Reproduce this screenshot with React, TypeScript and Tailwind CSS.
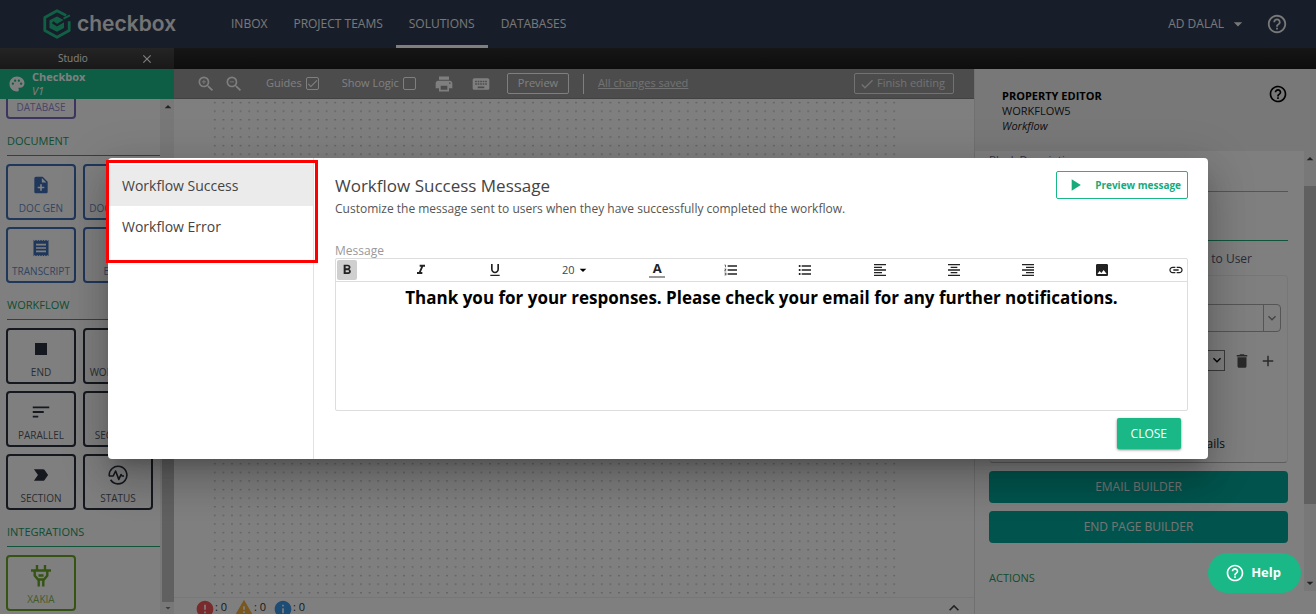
import type { ReactNode } from "react";
import {
  MdArrowDropDown,
  MdCheck,
  MdClose,
  MdDelete,
  MdAdd,
  MdError,
  MdExpandLess,
  MdFormatAlignCenter,
  MdFormatAlignLeft,
  MdFormatAlignRight,
  MdFormatBold,
  MdFormatItalic,
  MdFormatListBulleted,
  MdFormatListNumbered,
  MdFormatUnderlined,
  MdHelpOutline,
  MdImage,
  MdInfo,
  MdKeyboard,
  MdKeyboardArrowDown,
  MdLabelImportant,
  MdLink,
  MdNoteAdd,
  MdPalette,
  MdPlayArrow,
  MdPrint,
  MdReceipt,
  MdSort,
  MdStop,
  MdWarning,
  MdZoomIn,
  MdZoomOut,
} from "react-icons/md";

function Logo() {
  return (
    <svg viewBox="0 0 28 30" className="h-[30px] w-7" fill="none" aria-hidden="true">
      <path
        d="M23.2 6.4 14 1.7 1.8 8.4v13.2L14 28.3l12.2-6.7v-9.4"
        stroke="#23c08b"
        strokeWidth="2.8"
        strokeLinejoin="round"
      />
      <path d="M14 7.5 21 11.3v7.6L14 22.8l-7.5-3.9v-7.6z" fill="#23c08b" />
      <path d="M9.6 13.2l4.4 3 13.5-8" stroke="#2e3a52" strokeWidth="2.4" />
      <path d="M20.5 9.6 26.9 6.4" stroke="#23c08b" strokeWidth="2" />
    </svg>
  );
}

function PulseIcon() {
  return (
    <svg viewBox="0 0 20 20" className="size-5" fill="none" stroke="currentColor" strokeWidth="1.6" strokeLinejoin="round">
      <path d="M1.3 11.2A8.8 8.8 0 1 1 2.6 14.8M4 16.6c.5.5 1 .8 1.5 1.1" />
      <path d="M1 11h4.2l2.4-5 3.2 8.4 2.2-4.8 1.2 1.4H16" />
    </svg>
  );
}

function PlugIcon() {
  return (
    <svg viewBox="0 0 20 22" className="h-[22px] w-5" fill="none" stroke="currentColor" strokeWidth="2.4">
      <path d="M6 0v5M14 0v5M0 5.5h20M3.7 6v4.500L7 14.500h6l3.300-4V6M7.700 14v7.500M12.300 14v7.500M7.500 10.500h5" />
    </svg>
  );
}

type Tile = { label: string; icon?: ReactNode };
type Section = { title: string; color: string; tiles: Tile[] };

const sections: Section[] = [
  {
    title: "DOCUMENT",
    color: "border-[#3c6eb4] text-[#3c6eb4]",
    tiles: [
      { label: "DOC GEN", icon: <MdNoteAdd /> },
      { label: "DOC MERGE" },
      { label: "TRANSCRIPT", icon: <MdReceipt /> },
      { label: "EMAIL" },
    ],
  },
  {
    title: "WORKFLOW",
    color: "border-[#2a303c] text-[#2a303c]",
    tiles: [
      { label: "END", icon: <MdStop className="size-6" /> },
      { label: "WORKFLOW" },
      { label: "PARALLEL", icon: <MdSort className="size-[22px]" /> },
      { label: "SECTIONS" },
      { label: "SECTION", icon: <MdLabelImportant /> },
      { label: "STATUS", icon: <PulseIcon /> },
    ],
  },
  {
    title: "INTEGRATIONS",
    color: "border-[#6aa626] text-[#6aa626]",
    tiles: [{ label: "XAKIA", icon: <PlugIcon /> }],
  },
];

function TileButton({ label, icon, color }: Tile & { color: string }) {
  return (
    <button type="button" className={`flex h-14 w-[70px] flex-col items-center justify-end rounded border-2 pb-[3px] ${color}`}>
      <span className="mb-1 flex h-6 items-center text-[20px]">{icon}</span>
      <span className="text-[10px] leading-[14px] whitespace-nowrap opacity-80">{label}</span>
    </button>
  );
}

function TopNav() {
  return (
    <header className="flex h-12 shrink-0 items-center bg-[#2e3a52] text-[#f0f0f0]">
      <a href="#" className="ml-[43px] flex w-[175px] items-center gap-1.5 text-[#e8e8e8]">
        <Logo />
        <span className="font-[Inter] text-[21px] font-semibold">checkbox</span>
      </a>
      <nav className="flex h-full items-stretch text-[12px]">
        {["INBOX", "PROJECT TEAMS", "SOLUTIONS", "DATABASES"].map((item) => (
          <a
            key={item}
            href="#"
            className={`flex items-center border-b-[3px] px-[13px] pt-[3px] ${item === "SOLUTIONS" ? "border-white" : "border-transparent"}`}
          >
            {item}
          </a>
        ))}
      </nav>
      <button type="button" className="ml-auto flex items-center gap-1 text-[12px]">
        AD DALAL
        <MdArrowDropDown className="size-5" />
      </button>
      <button type="button" aria-label="Help centre" className="mr-7 ml-4.5">
        <MdHelpOutline className="size-[22px]" />
      </button>
    </header>
  );
}

function TabStrip() {
  return (
    <div className="flex h-[21px] shrink-0 bg-linear-to-b from-[#2c2c2c] to-[#1c1c1c]">
      <div className="flex w-[174px] items-center bg-linear-to-b from-[#484848] to-[#323232] text-[10px] text-white">
        <span className="ml-[58px]">Studio</span>
        <button type="button" aria-label="Close tab" className="mr-5 ml-auto">
          <MdClose className="size-[14px]" />
        </button>
      </div>
    </div>
  );
}

function Sidebar() {
  return (
    <aside className="flex w-[174px] shrink-0 flex-col overflow-hidden">
      <div className="flex h-[30px] shrink-0 items-center gap-1.5 bg-[#1abc88] pl-2 text-white">
        <MdPalette className="size-[18px]" />
        <div className="text-[11px] leading-[14px]">
          <div className="font-bold">Checkbox</div>
          <div className="italic">V1</div>
        </div>
      </div>
      <div className="flex min-h-0 flex-1">
        <div className="w-40 shrink-0 overflow-hidden">
          <div className="-mt-9 pl-1.5">
            <TileButton label="DATABASE" color="border-[#7b6bc0] text-[#7b6bc0]" />
          </div>
          {sections.map((section) => (
            <section key={section.title}>
              <h2 className="mt-[13px] mb-2 ml-[7px] h-6 border-b border-[#20a878] text-[11px] leading-[18px] text-[#1b9a64]">
                {section.title}
              </h2>
              <div className="flex flex-wrap gap-[7px] pl-1.5">
                {section.tiles.map((tile) => (
                  <TileButton key={tile.label} {...tile} color={section.color} />
                ))}
              </div>
            </section>
          ))}
        </div>
        <div className="flex flex-1 flex-col items-center bg-[#f1f1f1]">
          <MdArrowDropDown className="size-4 rotate-180 text-[#444]" />
          <div className="mt-20 w-3 flex-1 bg-[#c1c1c1]" />
          <MdArrowDropDown className="size-3 text-[#777]" />
        </div>
      </div>
    </aside>
  );
}

function Canvas() {
  return (
    <main className="flex min-w-0 flex-1 flex-col">
      <div className="flex h-[30px] shrink-0 items-center border-b border-[#858585] bg-[#989898] pl-[22px] text-[11px] text-white">
        <button type="button" aria-label="Zoom in">
          <MdZoomIn className="size-5" />
        </button>
        <button type="button" aria-label="Zoom out" className="ml-2">
          <MdZoomOut className="size-5" />
        </button>
        <label className="ml-[22px] flex items-center gap-1">
          Guides
          <span className="relative flex size-[13px]">
            <input type="checkbox" defaultChecked className="size-[13px] appearance-none rounded-xs border border-current" />
            <MdCheck className="pointer-events-none absolute inset-0 size-[13px]" />
          </span>
        </label>
        <label className="ml-[23px] flex items-center gap-1">
          Show Logic
          <input type="checkbox" className="size-[13px] appearance-none rounded-xs border border-current" />
        </label>
        <button type="button" aria-label="Print" className="ml-[18px]">
          <MdPrint className="size-5" />
        </button>
        <button type="button" aria-label="Shortcuts" className="ml-[17px]">
          <MdKeyboard className="size-5" />
        </button>
        <button type="button" className="ml-4 h-[21px] rounded-xs border border-current px-2.5">
          Preview
        </button>
        <div className="ml-3.5 h-5 w-px bg-white" />
        <a href="#" className="ml-3.5 text-[#e4e4e4] underline">
          All changes saved
        </a>
        <button type="button" className="mr-5 ml-auto flex h-[21px] items-center gap-0.5 rounded-xs border border-current pr-2 pl-1 text-[#e4e4e4]">
          <MdCheck className="size-4" />
          Finish editing
        </button>
      </div>
      <div className="min-h-0 flex-1 pr-[75px] pl-[37px]">
        <svg className="size-full" aria-hidden="true">
          <defs>
            <pattern id="dots" width="8.6" height="8.6" patternUnits="userSpaceOnUse">
              <rect x="3.2" y="3" width="1.2" height="1.2" fill="#999" />
            </pattern>
          </defs>
          <rect width="100%" height="100%" fill="url(#dots)" />
        </svg>
      </div>
      <div className="flex h-[17px] shrink-0 items-start gap-[7px] overflow-hidden border-t border-[#eee] pl-[21px] text-[11px] leading-[18px] text-[#333]">
        <span className="flex">
          <MdError className="mt-px size-5 text-[#f2555a]" />: 0
        </span>
        <span className="flex">
          <MdWarning className="size-5 text-[#f0b040]" />: 0
        </span>
        <span className="flex">
          <MdInfo className="mt-px size-5 text-[#3a98ea]" />: 0
        </span>
        <MdExpandLess className="mr-2.5 ml-auto size-5 text-[#444]" />
      </div>
    </main>
  );
}

function PropertyEditor() {
  return (
    <aside className="flex w-[342px] shrink-0 flex-col border-l border-[#e0e0e0]">
      <div className="flex h-[82px] shrink-0 items-start justify-between bg-[#f0f0f0] pt-[19px] pr-7 pl-[27px] text-[11px] leading-[15px] text-[#222]">
        <div>
          <h2 className="font-bold text-black">PROPERTY EDITOR</h2>
          <div>WORKFLOW5</div>
          <div className="italic">Workflow</div>
        </div>
        <MdHelpOutline className="-mt-1 size-5 text-black" />
      </div>
      <div className="flex min-h-0 flex-1">
        <div className="min-w-0 flex-1 pr-4 pl-3.5">
          <label htmlFor="block-description" className="block text-[11px] leading-[18px] text-[#666a88]">
            Block Description
          </label>
          <input id="block-description" className="block h-[23px] w-full border-b border-[#aaa] bg-transparent" />
          <div className="mt-12 h-px bg-[#20a878]" />
          <div className="mt-2 mb-1.5 flex justify-end pr-9 text-[12px] leading-5 text-[#555a70]">Email to User</div>
          <div className="flex h-[188px] flex-col rounded border border-[#eee] border-b-[#bbb] px-1.5 pt-7">
            <button type="button" aria-label="Recipient" className="flex h-7 shrink-0 justify-end rounded border border-[#aaa]">
              <span className="flex h-full items-center border-l border-[#aaa] text-[#888]">
                <MdKeyboardArrowDown className="size-4" />
              </span>
            </button>
            <div className="mt-[18px] flex items-center justify-end gap-2 text-[#555]">
              <div className="relative flex w-40">
                <select aria-label="Template" className="h-[21px] w-full appearance-none border border-[#777]" />
                <MdKeyboardArrowDown className="pointer-events-none absolute top-0.5 right-0 size-4 text-black" />
              </div>
              <MdDelete className="size-[18px]" />
              <MdAdd className="mr-1 size-[18px]" />
            </div>
            <div className="mt-[63px] flex justify-end pr-14 text-[12px] leading-5 text-[#222]">Details</div>
          </div>
          <button type="button" className="mt-2 block h-8 w-full rounded-sm bg-[#00a99a] text-[12px] text-[#e8e8e8]">
            EMAIL BUILDER
          </button>
          <button type="button" className="mt-2 block h-8 w-full rounded-sm bg-[#00a99a] text-[12px] text-[#e8e8e8]">
            END PAGE BUILDER
          </button>
          <h3 className="mt-[26px] text-[11px] leading-[18px] text-[#1b9a64]">ACTIONS</h3>
        </div>
        <div className="mb-[23px] flex w-3 flex-col items-center bg-[#f1f1f1]">
          <MdArrowDropDown className="size-4 rotate-180 text-[#444]" />
          <div className="mt-[19px] h-[318px] w-full bg-[#c1c1c1]" />
          <MdArrowDropDown className="mt-auto size-4 text-[#444]" />
        </div>
      </div>
    </aside>
  );
}

const editorTools = [
  { label: "Bold", icon: <MdFormatBold /> },
  { label: "Italic", icon: <MdFormatItalic /> },
  { label: "Underline", icon: <MdFormatUnderlined /> },
  { label: "Font size" },
  { label: "Text colour", icon: <span className="flex h-4 w-4 items-center justify-center border-b-2 border-[#999] text-[13px] font-bold">A</span> },
  { label: "Numbered list", icon: <MdFormatListNumbered /> },
  { label: "Bulleted list", icon: <MdFormatListBulleted /> },
  { label: "Align left", icon: <MdFormatAlignLeft /> },
  { label: "Align center", icon: <MdFormatAlignCenter /> },
  { label: "Align right", icon: <MdFormatAlignRight /> },
  { label: "Insert image", icon: <MdImage /> },
  { label: "Insert link", icon: <MdLink /> },
];

function EditorToolbar() {
  return (
    <div className="flex h-[23px] items-center justify-between border-b border-[#ddd] px-px">
      {editorTools.map((tool) =>
        tool.icon ? (
          <button
            key={tool.label}
            type="button"
            aria-label={tool.label}
            className={`flex size-5 items-center justify-center rounded-xs text-[16px] text-[#222] ${tool.label === "Bold" ? "bg-[#cfcfcf]" : ""}`}
          >
            {tool.icon}
          </button>
        ) : (
          <button key={tool.label} type="button" aria-label={tool.label} className="flex w-[34px] items-center justify-center text-[11px] text-[#444]">
            20
            <MdArrowDropDown className="size-4 text-black" />
          </button>
        )
      )}
    </div>
  );
}

function MessageDialog() {
  return (
    <div className="absolute inset-0 flex items-center justify-center bg-black/50 px-4 pt-[3px]">
      <div
        role="dialog"
        aria-label="Workflow Success Message"
        className="relative flex w-full max-w-[1100px] rounded bg-white text-[#444] shadow-[0_11px_15px_-7px_rgba(0,0,0,0.2),0_24px_38px_3px_rgba(0,0,0,0.14),0_9px_46px_8px_rgba(0,0,0,0.12)]"
      >
        <div className="w-[206px] shrink-0 border-r border-[#e2e2e2] pt-[7px] text-[14px]">
          <button type="button" className="block h-[41px] w-full bg-[#ebebeb] pl-3.5 text-left">
            Workflow Success
          </button>
          <button type="button" className="block h-[41px] w-full pl-3.5 text-left">
            Workflow Error
          </button>
        </div>
        <div className="absolute top-0.5 -left-0.5 h-[103px] w-[212px] border-3 border-[#ff0000]" />
        <div className="flex min-w-0 flex-1 flex-col pt-[13px] pr-5 pb-2.5 pl-[21px]">
          <div className="flex items-start justify-between">
            <div className="pt-[3px]">
              <h1 className="text-[17px] leading-6">Workflow Success Message</h1>
              <p className="text-[12px] leading-[22px] text-[#555]">
                Customize the message sent to users when they have successfully completed the workflow.
              </p>
            </div>
            <button
              type="button"
              className="flex h-7 items-center gap-2.5 rounded-xs border border-[#1ab886] pr-1.5 pl-2 text-[10px] font-bold text-[#17ab7c]"
            >
              <MdPlayArrow className="size-5" />
              Preview message
            </button>
          </div>
          <label htmlFor="message" className="mt-6 text-[12px] leading-[14px] text-[#999]">
            Message
          </label>
          <div className="rounded-xs border border-[#ddd]">
            <EditorToolbar />
            <textarea
              id="message"
              className="block h-32 w-full resize-none pt-1 text-center text-[17px] leading-6 font-bold text-black outline-none"
              defaultValue="Thank you for your responses. Please check your email for any further notifications."
            />
          </div>
          <button
            type="button"
            className="mt-[7px] mr-[7px] self-end rounded-xs bg-[#1ab886] px-3.5 text-[12px] leading-[31px] text-white shadow-sm shadow-black/40"
          >
            CLOSE
          </button>
        </div>
      </div>
    </div>
  );
}

export default function App() {
  return (
    <div className="relative flex h-screen flex-col overflow-hidden bg-white font-['Open_Sans',sans-serif]">
      <TopNav />
      <TabStrip />
      <div className="flex min-h-0 flex-1">
        <Sidebar />
        <Canvas />
        <PropertyEditor />
      </div>
      <MessageDialog />
      <button
        type="button"
        className="absolute right-[15px] bottom-[21px] flex h-10 items-center gap-1.5 rounded-full bg-[#1ab886] pr-5 pl-[17px] text-[13px] font-bold text-white"
      >
        <MdHelpOutline className="size-5" />
        Help
      </button>
    </div>
  );
}
